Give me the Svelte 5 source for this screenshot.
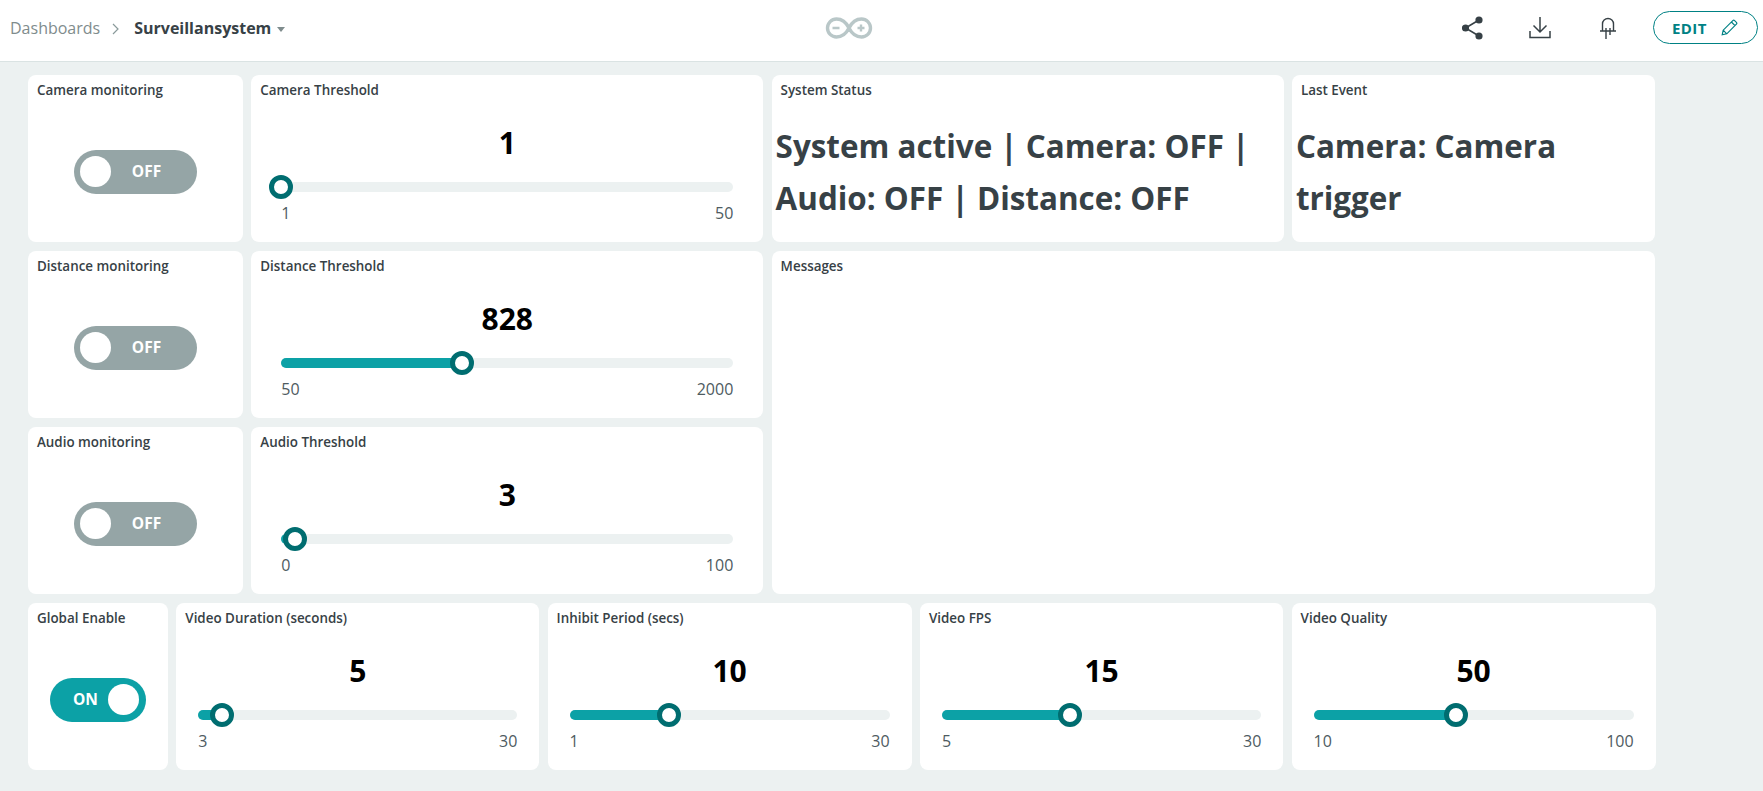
<script lang="ts">
  const sideRows = [
    { title: 'Camera monitoring', slider: { title: 'Camera Threshold', value: 1, min: 1, max: 50 } },
    { title: 'Distance monitoring', slider: { title: 'Distance Threshold', value: 828, min: 50, max: 2000 } },
    { title: 'Audio monitoring', slider: { title: 'Audio Threshold', value: 3, min: 0, max: 100 } },
  ]

  const bottomSliders = [
    { title: 'Video Duration (seconds)', value: 5, min: 3, max: 30 },
    { title: 'Inhibit Period (secs)', value: 10, min: 1, max: 30 },
    { title: 'Video FPS', value: 15, min: 5, max: 30 },
    { title: 'Video Quality', value: 50, min: 10, max: 100 },
  ]

  const pct = (s: { value: number; min: number; max: number }) =>
    ((s.value - s.min) / (s.max - s.min)) * 100
</script>

{#snippet slider(s: { title: string; value: number; min: number; max: number }, narrow: boolean)}
  <section class="card slider-card" class:narrow>
    <h2>{s.title}</h2>
    <div class="slider-value">{s.value}</div>
    <div class="track">
      <div class="fill" style="width: {pct(s)}%"></div>
      <div class="thumb" style="left: {pct(s)}%"></div>
    </div>
    <div class="range">
      <span>{s.min}</span>
      <span>{s.max}</span>
    </div>
  </section>
{/snippet}

{#snippet toggle(title: string, on: boolean)}
  <section class="card toggle-card">
    <h2>{title}</h2>
    <div class="toggle-wrap">
      <div class="toggle" class:on>
        <span class="knob"></span>
        <span class="toggle-label">{on ? 'ON' : 'OFF'}</span>
      </div>
    </div>
  </section>
{/snippet}

<header class="topbar">
  <nav class="crumbs">
    <span class="crumb-root">Dashboards</span>
    <svg class="chevron" width="7" height="12" viewBox="0 0 7 12" fill="none" stroke="#8a9a9b" stroke-width="1.2">
      <path d="M1 1l5 5-5 5" />
    </svg>
    <strong class="crumb-current">Surveillansystem</strong>
    <span class="caret"></span>
  </nav>

  <svg class="logo" width="50" height="22" viewBox="0 0 50 22" fill="none" stroke="#b9c7c8" stroke-width="3.4">
    <path d="M25 11C22 5 18 2 12.5 2a9 9 0 0 0 0 18C18 20 22 17 25 11C28 5 32 2 37.500 2a9 9 0 0 1 0 18C32 20 28 17 25 11Z" />
    <path d="M8.500 11h7M33.500 11h7M37 7.500v7" stroke-width="2.4" />
  </svg>

  <div class="actions">
    <svg class="icon-share" width="21" height="24" viewBox="0 0 21 24" fill="#374146" stroke="#374146" stroke-width="1.6">
      <circle cx="17" cy="4" r="2.800" />
      <circle cx="3.500" cy="12" r="2.800" />
      <circle cx="17" cy="20" r="2.800" />
      <path d="M17 4L3.500 12 17 20" fill="none" />
    </svg>
    <svg class="icon-download" width="22" height="24" viewBox="0 0 22 24" fill="none" stroke="#374146" stroke-width="1.5">
      <path d="M11 1v15M4.500 9.500L11 16l6.500-6.500M1 15v6.500h20V15" />
    </svg>
    <svg class="icon-led" width="18" height="24" viewBox="0 0 18 24" fill="none" stroke="#374146" stroke-width="1.4">
      <path d="M3.500 15V8a5.500 5.500 0 0 1 11 0v7M1 15h16M7 12v11M11 12v7" />
    </svg>
    <button class="edit">
      <span>EDIT</span>
      <svg width="17" height="17" viewBox="0 0 17 17" fill="none" stroke="#008184" stroke-width="1.2">
        <path d="M1.200 15.800l1-4.600L11.800 1.600a1.300 1.300 0 0 1 1.800 0l1.800 1.800a1.300 1.300 0 0 1 0 1.800L5.800 14.800zM2.200 11.200l3.600 3.600M10.400 3l3.600 3.600" />
      </svg>
    </button>
  </div>
</header>

<main class="board">
  <div class="top-grid">
    {#each sideRows as row}
      {@render toggle(row.title, false)}
      {@render slider(row.slider, false)}
    {/each}
    <section class="card status-card status-system">
      <h2>System Status</h2>
      <p class="status-text">System active | Camera: OFF | Audio: OFF | Distance: OFF</p>
    </section>
    <section class="card status-card status-event">
      <h2>Last Event</h2>
      <p class="status-text">Camera: Camera trigger</p>
    </section>
    <section class="card messages">
      <h2>Messages</h2>
    </section>
  </div>

  <div class="bottom-grid">
    {@render toggle('Global Enable', true)}
    {#each bottomSliders as s}
      {@render slider(s, true)}
    {/each}
  </div>
</main>

<style>
  :global(body) {
    background: #ecf1f1;
    font-family: 'Open Sans', sans-serif;
    color: #374146;
  }

  .topbar {
    height: 55px;
    background: #fff;
    border-bottom: 1px solid #dae3e3;
    display: flex;
    align-items: center;
    padding: 0 5px 6px 10px;
  }

  .crumbs {
    display: flex;
    align-items: center;
    font-size: 16px;
  }

  .crumb-root {
    color: #7f8c8d;
  }

  .chevron {
    margin: 2px 15px 0 12px;
  }

  .crumb-current {
    font-weight: 700;
  }

  .caret {
    margin: 3px 0 0 6px;
    border-left: 4px solid transparent;
    border-right: 4px solid transparent;
    border-top: 5px solid #7f8c8d;
  }

  .logo {
    display: block;
    margin-left: 539px;
  }

  .actions {
    margin-left: auto;
    display: flex;
    align-items: center;
  }

  .icon-share {
    margin-right: 46px;
  }

  .icon-download {
    margin-right: 48px;
  }

  .icon-led {
    margin-right: 36px;
  }

  .edit {
    width: 105px;
    height: 33px;
    border: 1px solid #008184;
    border-radius: 17px;
    background: #fff;
    color: #008184;
    font: 700 15px 'Open Sans', sans-serif;
    letter-spacing: 0.4px;
    display: flex;
    align-items: center;
    gap: 14px;
    padding: 0 0 0 18px;
  }

  .board {
    padding: 13px 0 21px 28px;
    display: flex;
    flex-direction: column;
    gap: 9px;
    width: 1628px;
  }

  .top-grid {
    display: grid;
    grid-template-columns: 215px 512px 512px 363.600px;
    grid-template-rows: repeat(3, 167px);
    gap: 9px 8.300px;
  }

  .bottom-grid {
    display: grid;
    grid-template-columns: 140px 363px 364px 363.400px 364px;
    grid-template-rows: 167px;
    gap: 8.300px;
  }

  .toggle-card {
    grid-column: 1;
  }

  .status-system {
    grid-column: 3;
    grid-row: 1;
  }

  .status-event {
    grid-column: 4;
    grid-row: 1;
  }

  .messages {
    grid-column: 3 / 5;
    grid-row: 2 / 4;
  }

  .card {
    background: #fff;
    border-radius: 8px;
    padding: 6px 9px;
    min-width: 0;
    display: flex;
    flex-direction: column;
  }

  h2 {
    margin: 0;
    font-size: 13.400px;
    font-weight: 600;
    line-height: 18px;
    color: #374146;
  }

  .toggle-wrap {
    flex: 1;
    display: flex;
    align-items: center;
    justify-content: center;
    padding-top: 8px;
  }

  .toggle {
    width: 123px;
    height: 44px;
    border-radius: 22px;
    background: #95a5a6;
    display: flex;
    align-items: center;
    padding: 0 15px 0 6px;
    box-sizing: border-box;
    color: #fff;
  }

  .toggle-label {
    flex: 1;
    text-align: center;
    font-size: 15.500px;
    font-weight: 700;
    padding-bottom: 2px;
  }

  .knob {
    width: 31px;
    height: 31px;
    border-radius: 50%;
    background: #fff;
    flex: none;
  }

  .toggle.on {
    width: 96px;
    background: #0ca1a6;
    flex-direction: row-reverse;
    padding: 0 7px 0 6px;
  }

  .toggle.on .toggle-label {
    padding-left: 7px;
  }

  .slider-card {
    padding: 6px 30px 0;
    position: relative;
  }

  .slider-card.narrow {
    padding: 6px 22px 0;
  }

  .slider-card h2 {
    margin: 0 -21px;
  }

  .slider-card.narrow h2 {
    margin: 0 -13px;
  }

  .slider-value {
    margin-top: 23px;
    text-align: center;
    font-size: 30px;
    font-weight: 700;
    line-height: 41px;
    color: #000;
  }

  .track {
    position: relative;
    height: 10px;
    margin-top: 19px;
    border-radius: 5px;
    background: #ecf1f1;
  }

  .fill {
    height: 100%;
    border-radius: 5px;
    background: #0ca1a6;
  }

  .thumb {
    position: absolute;
    top: 50%;
    width: 24px;
    height: 24px;
    box-sizing: border-box;
    border: 5.500px solid #006d70;
    border-radius: 50%;
    background: #fff;
    transform: translate(-50%, -50%);
  }

  .range {
    display: flex;
    justify-content: space-between;
    margin-top: 10px;
    font-size: 16px;
    line-height: 22px;
    color: #4e5b61;
  }

  .status-text {
    margin: 21px -5px 0;
    font-size: 31.400px;
    font-weight: 700;
    line-height: 51.500px;
    color: #374146;
  }
</style>
